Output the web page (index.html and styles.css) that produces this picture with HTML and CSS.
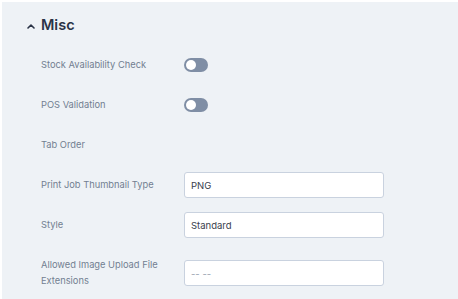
FILE: index.html
```html
<!DOCTYPE html>
<html>
<head>
<meta charset="utf-8">
<link rel="stylesheet" href="styles.css">
</head>
<body>
<div class="frame">
  <section class="panel">
    <h2 class="heading">
      <svg class="chev" width="8" height="6" viewBox="0 0 8 6"><path d="M1 5 L4 2 L7 5" fill="none" stroke="#2a3346" stroke-width="1.6" stroke-linecap="round" stroke-linejoin="round"/></svg>
      <span>Misc</span>
    </h2>
    <div class="rows">
      <div class="row"><div class="label">Stock Availability Check</div><div class="control"><span class="toggle"><span class="knob"></span></span></div></div>
      <div class="row"><div class="label">POS Validation</div><div class="control"><span class="toggle"><span class="knob"></span></span></div></div>
      <div class="row"><div class="label">Tab Order</div><div class="control"></div></div>
      <div class="row"><div class="label">Print Job Thumbnail Type</div><div class="control"><div class="input">PNG</div></div></div>
      <div class="row"><div class="label">Style</div><div class="control"><div class="input">Standard</div></div></div>
      <div class="row last"><div class="label">Allowed Image Upload File<br>Extensions</div><div class="control"><div class="input placeholder">-- --</div></div></div>
    </div>
  </section>
</div>
</body>
</html>
```

FILE: styles.css
```css
html, body {
  margin: 0;
  padding: 0;
  background: #ffffff;
}
body {
  font-family: Inter, "Noto Sans", "Liberation Sans", sans-serif;
}
.frame {
  padding: 2px 0 0 2px;
  height: 297px;
  overflow: hidden;
}
.panel {
  background: #eef2f6;
  height: 100%;
  padding-top: 13px;
  box-sizing: border-box;
}
.heading {
  margin: 0 0 10px 0;
  padding-left: 25px;
  height: 20px;
  display: flex;
  align-items: center;
  gap: 6px;
  font-size: 14.5px;
  font-weight: 600;
  color: #2a3346;
  line-height: 20px;
}
.chev {
  display: block;
  margin-top: 1px;
}
.rows {
  display: flex;
  flex-direction: column;
  padding-left: 39px;
}
.row {
  display: grid;
  grid-template-columns: 143px 200px;
  align-items: center;
  min-height: 40px;
}
.row.last {
  margin-top: 3px;
  min-height: 50px;
}
.label {
  font-size: 9.3px;
  line-height: 16px;
  color: #727f91;
}
.toggle {
  display: block;
  width: 24px;
  height: 14px;
  border-radius: 7px;
  background: #7f8ea5;
  position: relative;
}
.knob {
  position: absolute;
  left: 2px;
  top: 2px;
  width: 10px;
  height: 10px;
  border-radius: 50%;
  background: #ffffff;
}
.input {
  box-sizing: border-box;
  height: 26px;
  background: #ffffff;
  border: 1px solid #c9d2df;
  border-radius: 3px;
  padding: 0 6px;
  display: flex;
  align-items: center;
  font-size: 9.5px;
  color: #38404d;
}
.input.placeholder {
  color: #9aa3b0;
}
```
